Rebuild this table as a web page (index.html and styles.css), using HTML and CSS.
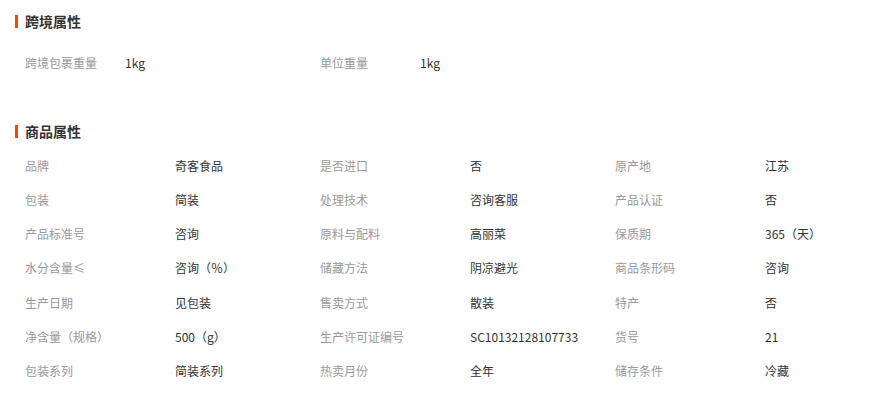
FILE: index.html
```html
<!DOCTYPE html>
<html lang="zh-CN">
  <head>
    <meta charset="UTF-8" />
    <title>商品属性</title>
    <link rel="stylesheet" href="styles.css">
  </head>
  <body>
    <div class="attrs">
      <h3 class="attr-title">跨境属性</h3>
      <div class="attr-grid cross">
        <div class="attr-item"><span class="attr-name">跨境包裹重量</span><span class="attr-val">1kg</span></div>
        <div class="attr-item"><span class="attr-name">单位重量</span><span class="attr-val">1kg</span></div>
      </div>

      <h3 class="attr-title goods">商品属性</h3>
      <div class="attr-grid">
        <div class="attr-item"><span class="attr-name">品牌</span><span class="attr-val">奇客食品</span></div>
        <div class="attr-item"><span class="attr-name">是否进口</span><span class="attr-val">否</span></div>
        <div class="attr-item"><span class="attr-name">原产地</span><span class="attr-val">江苏</span></div>

        <div class="attr-item"><span class="attr-name">包装</span><span class="attr-val">简装</span></div>
        <div class="attr-item"><span class="attr-name">处理技术</span><span class="attr-val">咨询客服</span></div>
        <div class="attr-item"><span class="attr-name">产品认证</span><span class="attr-val">否</span></div>

        <div class="attr-item"><span class="attr-name">产品标准号</span><span class="attr-val">咨询</span></div>
        <div class="attr-item"><span class="attr-name">原料与配料</span><span class="attr-val">高丽菜</span></div>
        <div class="attr-item"><span class="attr-name">保质期</span><span class="attr-val">365（天）</span></div>

        <div class="attr-item"><span class="attr-name">水分含量≤</span><span class="attr-val">咨询（％）</span></div>
        <div class="attr-item"><span class="attr-name">储藏方法</span><span class="attr-val">阴凉避光</span></div>
        <div class="attr-item"><span class="attr-name">商品条形码</span><span class="attr-val">咨询</span></div>

        <div class="attr-item"><span class="attr-name">生产日期</span><span class="attr-val">见包装</span></div>
        <div class="attr-item"><span class="attr-name">售卖方式</span><span class="attr-val">散装</span></div>
        <div class="attr-item"><span class="attr-name">特产</span><span class="attr-val">否</span></div>

        <div class="attr-item"><span class="attr-name">净含量（规格）</span><span class="attr-val">500（g）</span></div>
        <div class="attr-item"><span class="attr-name">生产许可证编号</span><span class="attr-val">SC10132128107733</span></div>
        <div class="attr-item"><span class="attr-name">货号</span><span class="attr-val">21</span></div>

        <div class="attr-item"><span class="attr-name">包装系列</span><span class="attr-val">简装系列</span></div>
        <div class="attr-item"><span class="attr-name">热卖月份</span><span class="attr-val">全年</span></div>
        <div class="attr-item"><span class="attr-name">储存条件</span><span class="attr-val">冷藏</span></div>
      </div>
    </div>
  </body>
</html>
```

FILE: styles.css
```css
body {
  margin: 0;
  background: #fff;
  font-family: "Noto Sans CJK SC", "Noto Sans", sans-serif;
  font-size: 12px;
  color: #333;
}

.attrs {
  padding: 11px 0 0 15px;
}

.attr-title {
  display: flex;
  align-items: center;
  gap: 7px;
  margin: 0;
  height: 20px;
  font-size: 14px;
  font-weight: bold;
  color: #333;
}

.attr-title::before {
  content: "";
  width: 3px;
  height: 13px;
  background: #f40;
}

.attr-title.goods {
  margin-top: 42px;
}

.attr-grid {
  display: grid;
  grid-template-columns: repeat(3, 295px);
  grid-auto-rows: 34.2px;
  padding-left: 10px;
  margin-top: 7px;
}

.attr-grid.cross {
  margin-top: 14px;
}

.attr-item {
  display: flex;
  align-items: center;
}

.attr-name {
  width: 150px;
  color: #999;
}

.cross .attr-name {
  width: 100px;
}

.attr-val {
  color: #333;
}
```
